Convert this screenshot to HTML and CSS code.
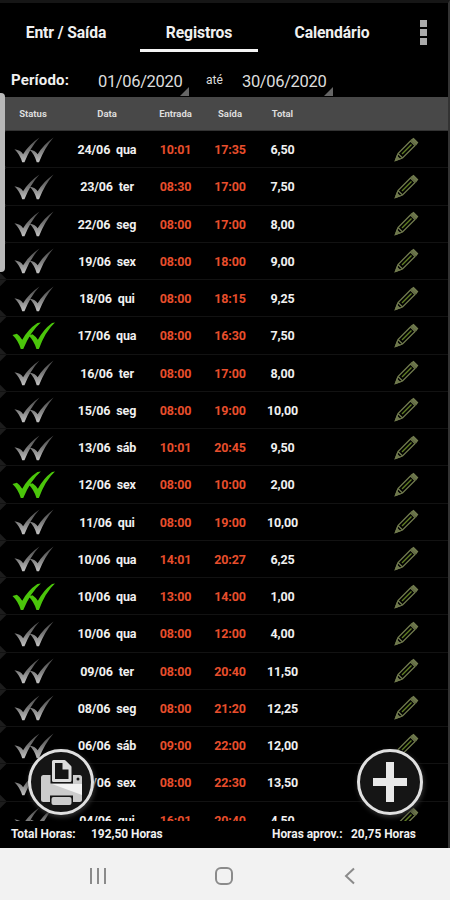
FILE: index.html
```html
<!DOCTYPE html>
<html lang="pt">
<head>
<meta charset="utf-8">
<title>Registros</title>
<link rel="stylesheet" href="styles.css">
</head>
<body>
<svg class="defs" aria-hidden="true">
  <defs>
    <linearGradient id="silver" x1="0" y1="0" x2="0" y2="1"><stop offset="0" stop-color="#444"/><stop offset=".5" stop-color="#777"/><stop offset="1" stop-color="#c4c4c4"/></linearGradient>
    <symbol id="checks" viewBox="0 0 44 30" preserveAspectRatio="none">
      <path d="M.5 14L5 12.500Q8.500 15 10.500 19Q16 8 26 1L29.500.5Q19 10 11.500 29H9Q6.500 20 .5 14ZM17 14.500L21 13Q24.500 15.500 26.500 19Q32 8 41 1L44 .5Q34 10 27.500 29H25Q22.500 20 17 14.500Z"/>
    </symbol>
    <symbol id="checks-thin" viewBox="0 0 44 30" preserveAspectRatio="none">
      <path d="M.5 14Q8 15 10 20Q16 9 28 .5Q18 12 11.500 29H9Q6.500 20 .5 14ZM17 14.500Q24 16 26 20Q32 9 43.500 .5Q34 12 27.500 29H25Q22.500 20 17 14.500Z"/>
    </symbol>
    <symbol id="pencil" viewBox="0 0 26 26">
      <path d="M1.500 24.500L4 17.500L16.500 5L21 9.500L8.500 22ZM4 17.500L8.500 22"/>
      <path class="core" d="M8 18L17.500 8.500"/>
      <path class="cap" d="M17.500 4L19.500 2.500L23.500 6.500L22 8.500Z"/>
      <path class="tip" d="M1.500 24.500L3 20.500L5.500 23Z"/>
    </symbol>
  </defs>
</svg>
<main class="app">
  <nav class="tabs">
    <span class="tab">Entr / Saída</span>
    <span class="tab active">Registros</span>
    <span class="tab">Calendário</span>
    <span class="more"><i></i><i></i><i></i></span>
  </nav>
  <section class="period">
    <b class="label">Período:</b>
    <span class="date">01/06/2020</span>
    <span class="until">até</span>
    <span class="date">30/06/2020</span>
  </section>
  <div class="cols head"><span>Status</span><span>Data</span><span>Entrada</span><span>Saída</span><span>Total</span></div>
  <section class="list" id="list"></section>
  <footer class="totals"><span>Total Horas:</span><span class="sum">192,50 Horas</span><span class="approved">Horas aprov.:</span><span>20,75 Horas</span></footer>
  <div class="scroll"></div>
  <button class="fab print" aria-label="Imprimir">
    <svg viewBox="0 0 66 66">
      <rect class="solid" x="13" y="26" width="41" height="27" rx="2.500"/>
      <path class="shade" d="M24 35H54V46Z"/>
      <path class="ink" d="M22.500 9H45V34.500H22.500Z"/>
      <path class="paper" d="M25.500 12.500H36.500L42 18V31.500H25.500Z"/>
      <path class="fold" d="M34.500 13V20.500H42V18L36.500 12.500Z"/>
      <path class="ink" d="M22 53V46.500H45V53Z"/>
      <rect class="solid" x="23.500" y="48" width="20" height="8" rx="2"/>
      <circle class="ink" cx="50" cy="30" r="1.500"/>
    </svg>
  </button>
  <button class="fab add" aria-label="Adicionar">
    <svg viewBox="0 0 66 66"><path class="bright" d="M29 13H37V29H50V37H37V53H29V37H16V29H29Z"/></svg>
  </button>
</main>
<div class="system">
  <svg viewBox="0 0 20 20"><path d="M3 2V18M10 2V18M17 2V18"/></svg>
  <svg viewBox="0 0 20 20"><rect x="2" y="2" width="16" height="16" rx="5"/></svg>
  <svg viewBox="0 0 20 20"><path d="M14 2.500L6 10L14 17.500"/></svg>
</div>
<script src="app.js"></script>
</body>
</html>
```
FILE: styles.css
```css
* { box-sizing: border-box; }
body { margin: 0; width: 450px; height: 900px; overflow: hidden; background: #000; color: #f0f0f0; font-family: Roboto, sans-serif; }
.defs { position: absolute; width: 0; height: 0; }
.app { position: relative; height: 848px; border-top: 3px solid #161616; border-right: 2px solid #333; overflow: hidden; }
.tabs { display: grid; grid-template-columns: 132px 134px 132px 50px; height: 49px; }
.tab { display: flex; align-items: center; justify-content: center; height: 49px; padding-bottom: 8px; padding-top: 17px; font-size: 15.700px; font-weight: 700; white-space: nowrap; letter-spacing: -.1px; }
.tab.active { margin: 0 8px; border-bottom: 3px solid #f4f4f4; padding-bottom: 5px; }
.more { display: flex; flex-direction: column; align-items: center; gap: 2px; padding-top: 17px; }
.more i { width: 7px; height: 7px; background: #aaa; }
.period { display: flex; height: 45px; padding: 0 0 1px 11px; align-items: flex-end; }
.label { width: 81px; font-size: 15px; line-height: 32px; letter-spacing: .15px; }
.date { position: relative; width: 97px; height: 31px; padding-left: 6px; font-size: 16.500px; letter-spacing: -.35px; line-height: 33px; color: #ddd; }
.date::after { content: ""; position: absolute; right: 0; bottom: 0; width: 9px; height: 9px; background: #666; clip-path: polygon(100% 0, 100% 100%, 0 100%); }
.until { width: 47px; padding-left: 17px; font-size: 12px; line-height: 32px; color: #ddd; }
.cols { display: grid; grid-template-columns: 66px 82px 55px 54px 51px 77px 41px; align-items: center; text-align: center; }
.head { height: 34px; background: #484848; border-bottom: 1px solid #333; font-size: 9.500px; font-weight: 700; color: #ddd; }
.list { height: 690px; overflow: hidden; }
.row { height: 37.250px; padding-top: 1px; border-bottom: 1px solid #121212; font-size: 12.500px; font-weight: 700; white-space: nowrap; background: linear-gradient(45deg, #1c1c1c 0 4px, transparent 5px), linear-gradient(135deg, #1c1c1c 0 4px, transparent 5px); }
.row .day { word-spacing: 3px; letter-spacing: -.15px; }
.row .time { color: #e84e2c; letter-spacing: -.1px; }
.row .total { letter-spacing: -.2px; }
.checks { display: block; width: 40px; height: 26px; margin-left: 13.500px; fill: url(#silver); }
.approved-row .checks { width: 43px; height: 28px; margin-left: 11.500px; fill: #4bc50b; }
.pencil { display: block; width: 26px; height: 26px; margin: -2px 0 0 8.500px; fill: none; stroke: #717b4e; stroke-width: 1.300; }
.core { stroke: #5f7d22; stroke-width: 1.500; }
.cap, .tip { fill: #69724a; }
.totals { display: flex; height: 27px; padding-left: 11px; font-size: 11.900px; font-weight: 700; line-height: 26px; white-space: nowrap; }
.totals span:first-child { width: 80px; }
.totals .sum { width: 181px; }
.totals .approved { width: 79px; }
.scroll { position: absolute; left: 0; top: 90px; width: 5px; height: 179px; background: #b8b8b8; border-radius: 0 4px 4px 0; }
.fab { position: absolute; top: 746px; width: 66px; height: 66px; padding: 0; border: 3px solid #e0e0e0; border-radius: 50%; background: #151515; box-shadow: 1px 2px 5px #333; }
.print { left: 28px; }
.add { left: 357px; }
.fab svg { display: block; width: 66px; height: 66px; margin: -3px; }
.solid { fill: #ccc; }
.bright { fill: #e8e8e8; }
.shade { fill: #f2f2f2; }
.ink { fill: #151515; }
.paper { fill: #151515; stroke: #ddd; stroke-width: 3; stroke-linejoin: round; }
.fold { fill: #ddd; }
.system { display: flex; height: 52px; align-items: center; padding: 3px 0 0 88px; gap: 106px; background: #f2f2f2; }
.system svg { width: 20px; height: 20px; flex: none; fill: none; stroke: #8b8b8b; stroke-width: 2; }
```
FILE: app.js
```js
const records = [
  ["24/06 qua", "10:01", "17:35", "6,50"],
  ["23/06 ter", "08:30", "17:00", "7,50"],
  ["22/06 seg", "08:00", "17:00", "8,00"],
  ["19/06 sex", "08:00", "18:00", "9,00"],
  ["18/06 qui", "08:00", "18:15", "9,25"],
  ["17/06 qua", "08:00", "16:30", "7,50", true],
  ["16/06 ter", "08:00", "17:00", "8,00"],
  ["15/06 seg", "08:00", "19:00", "10,00"],
  ["13/06 sáb", "10:01", "20:45", "9,50"],
  ["12/06 sex", "08:00", "10:00", "2,00", true],
  ["11/06 qui", "08:00", "19:00", "10,00"],
  ["10/06 qua", "14:01", "20:27", "6,25"],
  ["10/06 qua", "13:00", "14:00", "1,00", true],
  ["10/06 qua", "08:00", "12:00", "4,00"],
  ["09/06 ter", "08:00", "20:40", "11,50"],
  ["08/06 seg", "08:00", "21:20", "12,25"],
  ["06/06 sáb", "09:00", "22:00", "12,00"],
  ["05/06 sex", "08:00", "22:30", "13,50"],
  ["04/06 qui", "16:01", "20:40", "4,50"]
];
document.getElementById("list").innerHTML = records.map(([day, start, end, total, approved]) => `
  <div class="cols row ${approved ? "approved-row" : ""}">
    <svg class="checks"><use href="${approved ? "#checks" : "#checks-thin"}"/></svg>
    <span class="day">${day}</span><span class="time">${start}</span><span class="time">${end}</span><span class="total">${total}</span><span></span>
    <svg class="pencil"><use href="#pencil"/></svg>
  </div>`).join("");
```
